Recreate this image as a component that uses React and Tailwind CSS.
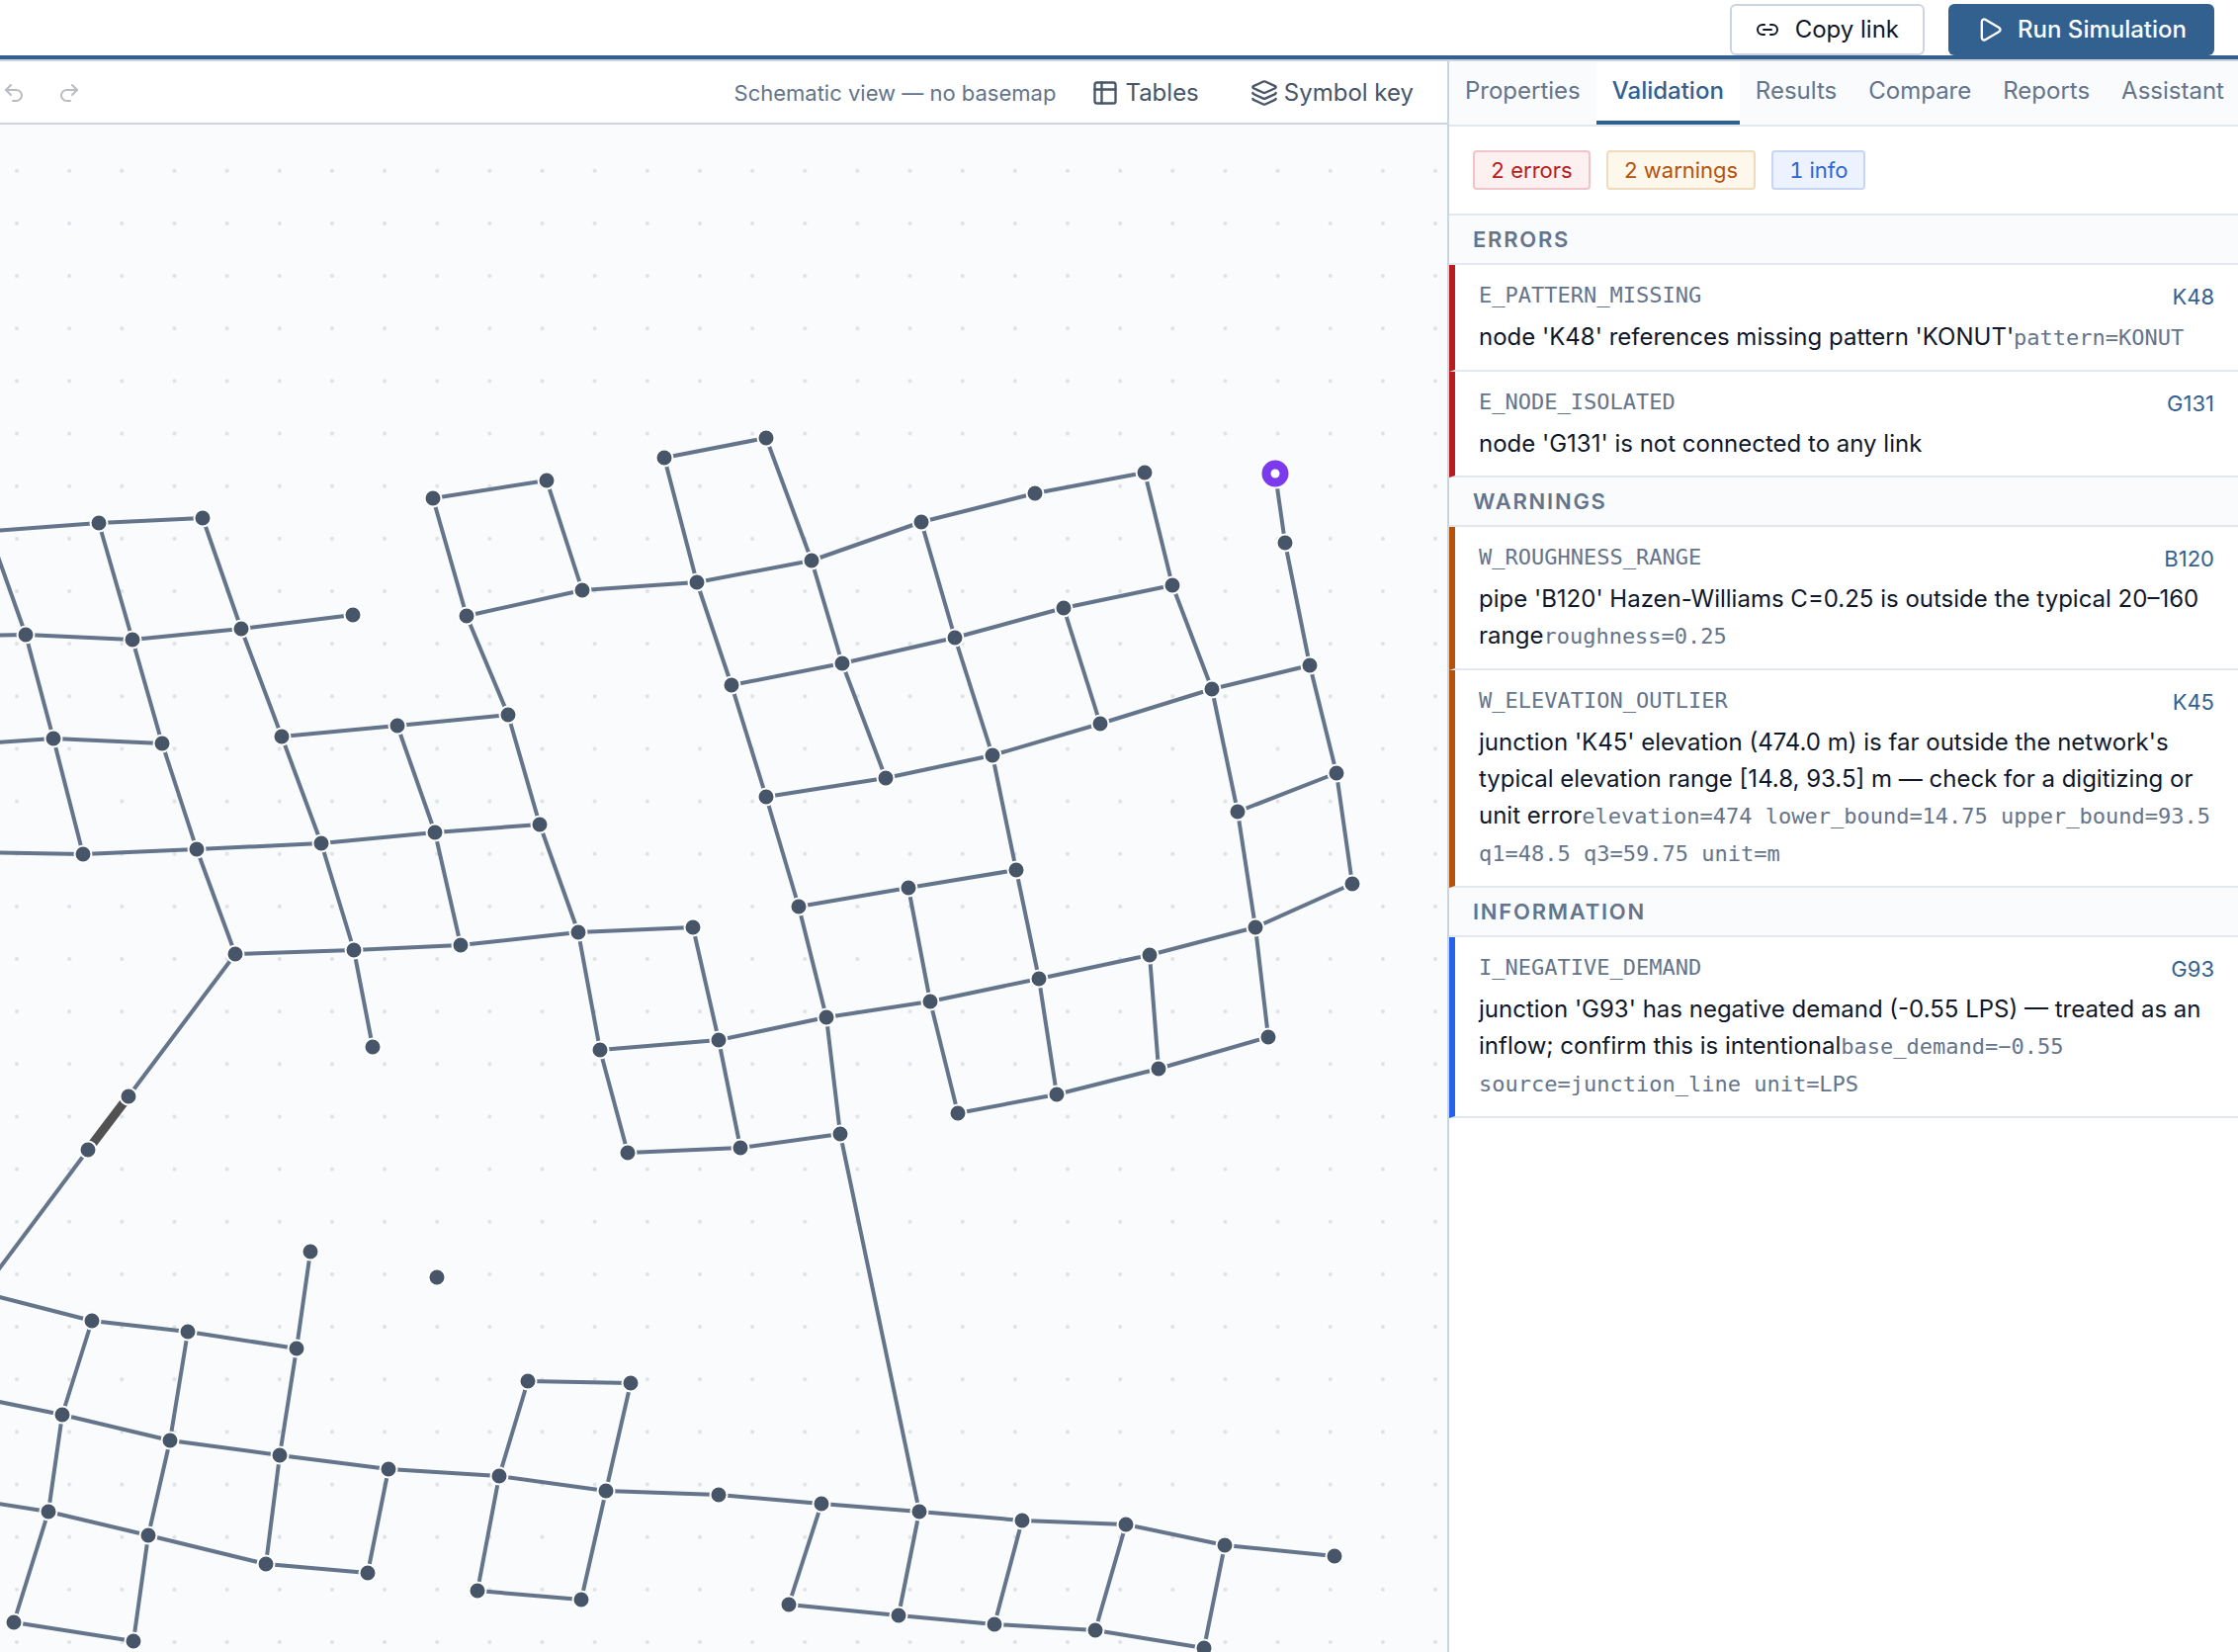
import { Link2, Play, Undo2, Redo2, Layers } from "lucide-react";

const NODES = {
  a1: [100, 529], a2: [205, 524], a3: [26, 642], a4: [134, 647], a5: [244, 636], a6: [357, 622],
  a7: [54, 747], a8: [164, 752], a9: [285, 745], a10: [402, 734], a11: [514, 723],
  a12: [84, 864], a13: [199, 859], a14: [325, 853], a15: [440, 842], a16: [546, 834],
  a17: [238, 965], a18: [358, 961], a19: [466, 956], a20: [585, 943], a21: [701, 938],
  a22: [377, 1059], a23: [607, 1062], a24: [727, 1052],
  b1: [438, 504], b2: [553, 486], b3: [472, 623], b4: [589, 597], b5: [705, 589],
  c1: [672, 463], c2: [775, 443], c3: [821, 567], c4: [932, 528], c5: [1047, 499], c6: [1158, 478],
  c7: [1300, 549], c8: [740, 693], c9: [852, 671], c10: [966, 645], c11: [1076, 615], c12: [1186, 592],
  c13: [1325, 673], c14: [1226, 697], c15: [1113, 732], c16: [1004, 764], c17: [896, 787], c18: [775, 806],
  c19: [1352, 782], c20: [1252, 821], c21: [1028, 880], c22: [919, 898], c23: [1368, 894],
  d1: [808, 917], d2: [836, 1029], d3: [941, 1013], d4: [1051, 990], d5: [1163, 966], d6: [1270, 938],
  d7: [1283, 1049], d8: [1172, 1081], d9: [1069, 1107], d10: [969, 1126], d11: [635, 1166], d12: [749, 1161], d13: [850, 1147],
  e1: [130, 1109], e2: [89, 1163], e3: [314, 1266], e4: [442, 1292], e5: [93, 1336], e6: [190, 1347], e7: [300, 1364],
  e8: [63, 1431], e9: [172, 1457], e10: [283, 1472], e11: [393, 1486], e12: [505, 1493], e13: [613, 1508], e14: [727, 1512],
  e15: [534, 1397], e16: [638, 1399], e17: [483, 1609], e18: [588, 1618], e19: [49, 1529], e20: [150, 1553],
  e21: [269, 1582], e22: [372, 1591], e23: [14, 1641], e24: [135, 1660],
  f1: [831, 1521], f2: [930, 1529], f3: [1034, 1538], f4: [1139, 1542], f5: [1239, 1563], f6: [1350, 1574],
  g1: [798, 1623], g2: [909, 1634], g3: [1006, 1643], g4: [1108, 1649], g5: [1218, 1667],
};

const SOURCE = [1290, 479];

// Each run is a chain of connected nodes; a pair is a point outside the visible area.
const RUNS = [
  [[-20, 538], "a1", "a2", "a5", "a9", "a14", "a18", "a22"],
  [[-12, 535], "a3", "a7", "a12"],
  [[-20, 643], "a3", "a4", "a5", "a6"],
  ["a1", "a4", "a8", "a13", "a17", "e1"],
  [[-20, 752], "a7", "a8"],
  [[-20, 862], "a12", "a13", "a14", "a15", "a16"],
  ["a9", "a10", "a11", "a16", "a20", "a23", "d11"],
  ["a10", "a15", "a19"],
  ["a17", "a18", "a19", "a20", "a21", "a24", "d12"],
  ["b3", "b1", "b2", "b4"],
  ["a11", "b3", "b4", "b5", "c3", "c4", "c5", "c6", "c12", "c14"],
  ["b5", "c1", "c2", "c3", "c9", "c17"],
  ["b5", "c8", "c18", "d1", "d2", "d13", "f2", "g2"],
  ["c8", "c9", "c10", "c11", "c12"],
  ["c4", "c10", "c16", "c21", "d4", "d9"],
  ["c11", "c15"],
  ["c18", "c17", "c16", "c15", "c14", "c13"],
  [SOURCE, "c7", "c13", "c19", "c23", "d6", "d7"],
  ["c14", "c20", "c19"],
  ["c20", "d6"],
  ["d1", "c22", "c21"],
  ["c22", "d3", "d10", "d9", "d8", "d7"],
  ["a23", "a24", "d2", "d3", "d4", "d5", "d6"],
  ["d5", "d8"],
  ["d11", "d12", "d13"],
  ["e2", [-20, 1309]],
  [[-20, 1307], "e5", "e6", "e7"],
  ["e3", "e7", "e10", "e21"],
  ["e5", "e8", "e19", "e23", "e24", "e20", "e9", "e6"],
  [[-20, 1414], "e8", "e9", "e10", "e11", "e12", "e13", "e14", "f1", "f2", "f3", "f4", "f5", "f6"],
  [[-20, 1518], "e19", "e20", "e21", "e22", "e11"],
  ["e12", "e15", "e16", "e13", "e18", "e17", "e12"],
  ["f1", "g1", "g2", "g3", "g4", "g5", "f5"],
  ["f3", "g3"],
  ["f4", "g4"],
];

const at = (p) => (typeof p === "string" ? NODES[p] : p);

function NetworkMap() {
  return (
    <svg className="block h-full w-full" role="img" aria-label="Network schematic">
      <defs>
        <pattern id="grid" x="17" y="46.7" width="53.15" height="53.15" patternUnits="userSpaceOnUse" patternTransform="translate(-26.5 -26.5)">
          <circle cx="26.5" cy="26.5" r="2" fill="#dde1e6" />
        </pattern>
      </defs>
      <rect width="100%" height="100%" fill="url(#grid)" />
      <g transform="translate(0 -126)">
        <g fill="none" stroke="#64748b" strokeWidth="4" strokeLinejoin="round">
          {RUNS.map((run, i) => (
            <polyline key={i} points={run.map((p) => at(p).join(",")).join(" ")} />
          ))}
        </g>
        <line x1="130" y1="1109" x2="89" y2="1163" stroke="#525252" strokeWidth="9" />
        <g fill="#475569" stroke="#ffffff" strokeWidth="2">
          {Object.entries(NODES).map(([id, [x, y]]) => (
            <circle key={id} cx={x} cy={y} r="8.5" />
          ))}
        </g>
        <circle cx={SOURCE[0]} cy={SOURCE[1]} r="14.5" fill="#7c3aed" stroke="#ffffff" strokeWidth="2" />
        <circle cx={SOURCE[0]} cy={SOURCE[1]} r="4.5" fill="#ffffff" />
      </g>
    </svg>
  );
}

function TableIcon() {
  return (
    <svg width="28" height="28" viewBox="0 0 24 24" fill="none" stroke="currentColor" strokeWidth="2" strokeLinecap="round" strokeLinejoin="round" aria-hidden="true">
      <rect x="3" y="3" width="18" height="18" rx="2" />
      <path d="M3 9h18M9 3v18" />
    </svg>
  );
}

const TABS = ["Properties", "Validation", "Results", "Compare", "Reports", "Assistant"];

const CHIPS = [
  { text: "2 errors", tone: "border-[#f1c5c8] bg-[#fdf0f0] text-[#b91c1c]" },
  { text: "2 warnings", tone: "border-[#f0dcbc] bg-[#fdf7ec] text-[#b45309]" },
  { text: "1 info", tone: "border-[#c7d5f7] bg-[#edf3fe] text-[#2f63d6]" },
];

const SECTIONS = [
  {
    title: "Errors",
    edge: "border-l-[#b91c1c]",
    items: [
      { code: "E_PATTERN_MISSING", target: "K48", text: "node 'K48' references missing pattern 'KONUT'", detail: "pattern=KONUT" },
      { code: "E_NODE_ISOLATED", target: "G131", text: "node 'G131' is not connected to any link" },
    ],
  },
  {
    title: "Warnings",
    edge: "border-l-[#b45309]",
    items: [
      { code: "W_ROUGHNESS_RANGE", target: "B120", text: "pipe 'B120' Hazen-Williams C=0.25 is outside the typical 20–160 range", detail: "roughness=0.25" },
      {
        code: "W_ELEVATION_OUTLIER",
        target: "K45",
        text: "junction 'K45' elevation (474.0 m) is far outside the network's typical elevation range [14.8, 93.5] m — check for a digitizing or unit error",
        detail: "elevation=474 lower_bound=14.75 upper_bound=93.5 q1=48.5 q3=59.75 unit=m",
      },
    ],
  },
  {
    title: "Information",
    edge: "border-l-[#2563eb]",
    items: [
      {
        code: "I_NEGATIVE_DEMAND",
        target: "G93",
        text: "junction 'G93' has negative demand (-0.55 LPS) — treated as an inflow; confirm this is intentional",
        detail: "base_demand=−0.55 source=junction_line unit=LPS",
      },
    ],
  },
];

function Issue({ issue, edge }) {
  return (
    <li className={`border-b-2 border-l-[6px] border-b-[#e2e8f0] pt-4 pr-6 pb-[14px] pl-6 ${edge}`}>
      <div className="flex items-start justify-between">
        <code className="font-['DejaVu_Sans_Mono',monospace] text-[22px] leading-[30px] text-[#64748b]">{issue.code}</code>
        <a href={`#${issue.target}`} className="text-[22px] leading-8 text-[#33618f]">{issue.target}</a>
      </div>
      <p className="mt-[6px] text-[24px] leading-[37px] text-[#0f172a]">
        {issue.text}
        {issue.detail && <span className="font-['DejaVu_Sans_Mono',monospace] text-[22px] text-[#64748b]">{issue.detail}</span>}
      </p>
    </li>
  );
}

export default function App() {
  return (
    <div className="flex h-screen flex-col bg-white font-['Inter',sans-serif] text-[24px] leading-9 text-[#0f172a]">
      <header className="flex items-center justify-end gap-6 border-b-4 border-[#33618f] pt-1 pr-6">
        <button className="flex h-[52px] items-center gap-4 rounded-md border-2 border-[#cbd5e1] px-6">
          <Link2 size={24} aria-hidden="true" />
          Copy link
        </button>
        <button className="flex h-[52px] items-center gap-[14px] rounded-md bg-[#33618f] px-7 font-medium text-white">
          <Play size={28} aria-hidden="true" />
          Run Simulation
        </button>
      </header>
      <div className="flex min-h-0 flex-1 border-t-2 border-[#cbd5e1]">
        <main className="flex min-w-0 flex-1 flex-col">
          <div className="flex h-16 shrink-0 items-center border-b-2 border-[#cbd5e1] pt-[2px] pr-[34px] pl-[2px]">
            <div className="flex gap-8 text-[#b9bdc2]">
              <button disabled aria-label="Undo"><Undo2 size={24} /></button>
              <button disabled aria-label="Redo"><Redo2 size={24} /></button>
            </div>
            <p className="ml-auto text-[22px] text-[#64748b]">Schematic view — no basemap</p>
            <button className="ml-9 flex items-center gap-1.5 text-[#475569]">
              <TableIcon />
              Tables
            </button>
            <button className="ml-[52px] flex items-center gap-1.5 text-[#475569]">
              <Layers size={28} aria-hidden="true" />
              Symbol key
            </button>
          </div>
          <div className="min-h-0 flex-1 overflow-hidden bg-[#f9fbfd]">
            <NetworkMap />
          </div>
        </main>
        <aside className="flex w-[800px] shrink-0 flex-col border-l-2 border-[#cbd5e1]">
          <div role="tablist" className="flex h-[66px] shrink-0 border-b-2 border-[#e2e8f0] bg-[#f9fbfd]">
            {TABS.map((tab) => (
              <button
                key={tab}
                role="tab"
                aria-selected={tab === "Validation"}
                className={
                  tab === "Validation"
                    ? "border-b-4 border-[#33618f] bg-white px-4 font-medium text-[#33618f]"
                    : "border-b-4 border-transparent px-4 text-[#64748b]"
                }
              >
                {tab}
              </button>
            ))}
          </div>
          <div className="flex gap-4 border-b-2 border-[#e2e8f0] p-6">
            {CHIPS.map((chip) => (
              <span key={chip.text} className={`flex h-10 items-center rounded-sm border-2 px-4 text-[22px] tabular-nums ${chip.tone}`}>{chip.text}</span>
            ))}
          </div>
          {SECTIONS.map((section) => (
            <section key={section.title}>
              <h2 className="flex h-[50px] items-center border-b-2 border-[#e2e8f0] bg-[#f9fbfd] px-6 text-[22px] font-semibold tracking-[0.08em] text-[#64748b] uppercase">
                {section.title}
              </h2>
              <ul>
                {section.items.map((issue) => (
                  <Issue key={issue.code} issue={issue} edge={section.edge} />
                ))}
              </ul>
            </section>
          ))}
        </aside>
      </div>
    </div>
  );
}
